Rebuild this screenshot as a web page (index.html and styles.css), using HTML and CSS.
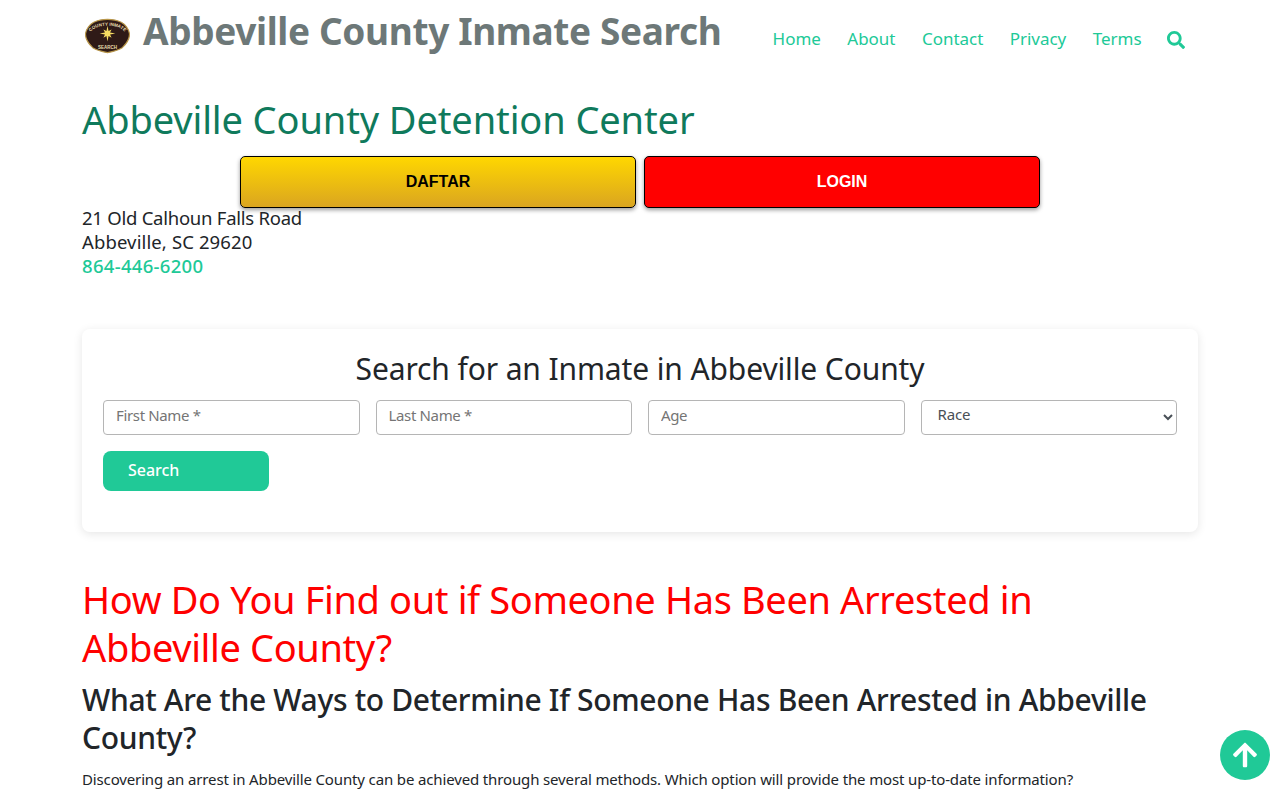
FILE: index.html
```html
<!DOCTYPE html>
<html lang="en">
<head>
<meta charset="utf-8">
<title>Abbeville County Inmate Search</title>
<link rel="stylesheet" href="styles.css">
</head>
<body>
<div class="container">
  <header class="topbar">
    <a class="brand" href="#">
      <svg class="logo" viewBox="0 0 46 36" width="45" height="36">
        <defs><path id="arc" d="M5 15 C9 5 37 5 41 15"/></defs>
        <path d="M23 1 C29 1 33 2 37 4 C41 6 45 11 45.500 16 C45.500 23 41 27 38 30 C33 33 28 34 23 35 C18 34 13 33 8 30 C5 27 .5 23 .5 16 C1 11 5 6 9 4 C13 2 17 1 23 1Z" fill="#2f1a17" stroke="#b9974a" stroke-width="1.200"/>
        <polygon points="23,7.500 24.070,12.910 27.200,11.300 25.590,14.430 31,15.500 25.590,16.570 27.200,19.700 24.070,18.090 23,23.500 21.930,18.090 18.800,19.700 20.410,16.570 15,15.500 20.410,14.430 18.800,11.300 21.930,12.910" fill="#f6dc63"/>
        <text class="logo-text" font-size="4.600"><textPath href="#arc" startOffset="50%" text-anchor="middle">COUNTY INMATE</textPath></text>
        <text class="logo-text" font-size="4.600" x="23" y="31" text-anchor="middle">SEARCH</text>
      </svg>
      <span class="brand-name">Abbeville County Inmate Search</span>
    </a>
    <nav class="nav">
      <a href="#">Home</a>
      <a href="#">About</a>
      <a href="#">Contact</a>
      <a href="#">Privacy</a>
      <a href="#">Terms</a>
      <a href="#" class="nav-search" aria-label="Search">
        <svg viewBox="0 0 512 512" width="18" height="18"><path fill="currentColor" d="M505 442.700L405.300 343c-4.500-4.500-10.600-7-17-7H372c27.600-35.300 44-79.700 44-128C416 93.100 322.900 0 208 0S0 93.100 0 208s93.100 208 208 208c48.300 0 92.700-16.400 128-44v16.300c0 6.400 2.500 12.500 7 17l99.700 99.700c9.400 9.400 24.600 9.400 33.900 0l28.300-28.300c9.400-9.400 9.400-24.600.1-34zM208 336c-70.700 0-128-57.200-128-128 0-70.700 57.200-128 128-128 70.700 0 128 57.200 128 128 0 70.700-57.200 128-128 128z"/></svg>
      </a>
    </nav>
  </header>

  <h1 class="page-title">Abbeville County Detention Center</h1>

  <div class="cta-row">
    <a class="cta cta-gold" href="#">DAFTAR</a>
    <a class="cta cta-red" href="#">LOGIN</a>
  </div>

  <address class="addr">
    21 Old Calhoun Falls Road<br>
    <span class="addr-city">Abbeville, SC 29620</span><br>
    <a href="#">864-446-6200</a>
  </address>

  <section class="card">
    <h2 class="card-title">Search for an Inmate in Abbeville County</h2>
    <form class="fields">
      <input class="field" type="text" placeholder="First Name *">
      <input class="field" type="text" placeholder="Last Name *">
      <input class="field" type="text" placeholder="Age">
      <select class="field field-select"><option>Race</option></select>
    </form>
    <button class="search-btn" type="button">Search</button>
  </section>

  <h2 class="red-head">How Do You Find out if Someone Has Been Arrested in Abbeville County?</h2>
  <h3 class="sub-head">What Are the Ways to Determine If Someone Has Been Arrested in Abbeville County?</h3>
  <p class="para">Discovering an arrest in Abbeville County can be achieved through several methods. Which option will provide the most up-to-date information?</p>
</div>

<a class="to-top" href="#" aria-label="Back to top">
  <svg viewBox="0 0 448 512" width="26" height="28"><path fill="#fff" d="M34.900 289.500l-22.200-22.200c-9.400-9.400-9.400-24.600 0-33.900L207 39c9.400-9.400 24.600-9.400 33.900 0l194.300 194.300c9.400 9.400 9.400 24.600 0 33.900L413 289.400c-9.500 9.500-25 9.300-34.300-.4L264 168.600V456c0 13.300-10.700 24-24 24h-32c-13.300 0-24-10.700-24-24V168.600L69.200 289.100c-9.300 9.800-24.800 10-34.300.4z"/></svg>
</a>
</body>
</html>
```

FILE: styles.css
```css
* { box-sizing: border-box; }
html, body { margin: 0; padding: 0; }
body {
  background: #fff;
  color: #212529;
  font-family: "Noto Sans", "Open Sans", sans-serif;
  overflow: hidden;
  height: 800px;
}
a { text-decoration: none; }
.container { width: 1116px; margin: 0 auto; }

.topbar { display: flex; justify-content: space-between; align-items: flex-start; height: 84px; }
.brand { display: flex; align-items: flex-start; gap: 13px; padding-top: 8px; margin-left: 3px; }
.logo { flex: none; margin-top: 10px; }
.logo-text { fill: #e9dcae; font-family: "Liberation Sans", sans-serif; font-weight: 700; }
.brand-name { color: #6d7878; font-size: 37px; font-weight: 700; letter-spacing: -.37px; white-space: nowrap; line-height: 46px; }

.nav { display: flex; align-items: center; gap: 26.500px; padding-top: 26px; padding-right: 13px; }
.nav a { color: #20c997; font-size: 17px; line-height: 26px; letter-spacing: -.03px; }
.nav-search { display: flex; margin-left: -1px; margin-top: 2px; }

.page-title { margin: 0; color: #0f7a5c; font-size: 38px; font-weight: 400; line-height: 48px; letter-spacing: -.11px; height: 72px; padding-top: 11px; }

.cta-row { display: flex; justify-content: center; gap: 8px; }
.cta {
  width: 396px; height: 52px;
  display: flex; align-items: center; justify-content: center;
  border: 1px solid #000; border-radius: 5px;
  font-family: "Liberation Sans", sans-serif; font-size: 16px; font-weight: 700;
  box-shadow: 0 2px 4px rgba(0,0,0,.4);
}
.cta-gold { background: linear-gradient(#ffd700, #daa520); color: #000; }
.cta-red { background: #f00; color: #fff; }

.addr { font-style: normal; font-size: 18.500px; line-height: 24px; margin-top: -2px; height: 123px; letter-spacing: -.25px; }
.addr-city { letter-spacing: .12px; }
.addr a { color: #20c997; font-weight: 500; letter-spacing: .3px; }

.card {
  height: 203px; padding: 20px 21px;
  border-radius: 8px;
  box-shadow: 0 2px 10px rgba(0,0,0,.1);
}
.card-title { margin: 0 0 11px; font-size: 30px; font-weight: 400; line-height: 40px; text-align: center; letter-spacing: -.12px; }
.fields { display: grid; grid-template-columns: repeat(4, 1fr); gap: 16px; }
.field {
  height: 35px; width: 100%; padding: 0 12px 5px;
  border: 1px solid #b5b5b5; border-radius: 4px;
  background: #fff; color: #495057;
  font-family: "Noto Sans", sans-serif; font-size: 15px; letter-spacing: -.35px;
}
.field::placeholder { color: #757575; opacity: 1; }
.field-select { padding-bottom: 8px; letter-spacing: -.15px; }
.search-btn {
  display: block; width: 166px; height: 40px; margin-top: 16px; padding: 0 0 2px 25px;
  border: 0; border-radius: 8px;
  background: #20c997; color: #fff; text-align: left;
  font-family: "Noto Sans", sans-serif; font-size: 16px; font-weight: 500; letter-spacing: -.05px;
}

.red-head { margin: 43px 0 0; color: #f00; font-size: 38px; font-weight: 400; line-height: 48px; letter-spacing: -.37px; }
.sub-head { margin: 10px 0 0; font-size: 30px; font-weight: 500; line-height: 38px; letter-spacing: -.33px; }
.para { margin: 10px 0 0; font-size: 15px; line-height: 24px; letter-spacing: -.14px; white-space: nowrap; }

.to-top {
  position: fixed; right: 10px; bottom: 20px;
  width: 50px; height: 50px; border-radius: 50%;
  background: #20c997;
  display: flex; align-items: center; justify-content: center;
}
```
